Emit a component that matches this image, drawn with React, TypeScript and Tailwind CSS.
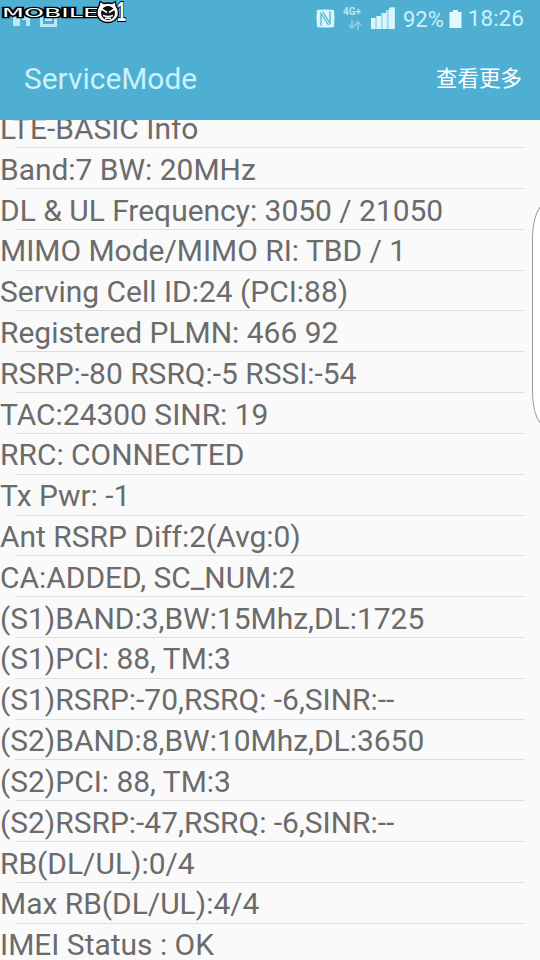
const rows = [
  "LTE-BASIC Info",
  "Band:7 BW: 20MHz",
  "DL & UL Frequency: 3050 / 21050",
  "MIMO Mode/MIMO RI: TBD / 1",
  "Serving Cell ID:24 (PCI:88)",
  "Registered PLMN: 466 92",
  "RSRP:-80 RSRQ:-5 RSSI:-54",
  "TAC:24300 SINR: 19",
  "RRC: CONNECTED",
  "Tx Pwr: -1",
  "Ant RSRP Diff:2(Avg:0)",
  "CA:ADDED, SC_NUM:2",
  "(S1)BAND:3,BW:15Mhz,DL:1725",
  "(S1)PCI: 88, TM:3",
  "(S1)RSRP:-70,RSRQ: -6,SINR:--",
  "(S2)BAND:8,BW:10Mhz,DL:3650",
  "(S2)PCI: 88, TM:3",
  "(S2)RSRP:-47,RSRQ: -6,SINR:--",
  "RB(DL/UL):0/4",
  "Max RB(DL/UL):4/4",
  "IMEI Status : OK",
];

function Watermark() {
  return (
    <svg width="140" height="30" viewBox="0 0 140 30" className="absolute top-0 left-0">
      <text
        x="2"
        y="17"
        textLength="97"
        lengthAdjust="spacingAndGlyphs"
        className="fill-white stroke-black stroke-[2.5px] font-['DejaVu_Sans'] text-[12.5px]"
        paintOrder="stroke"
      >
        MOBILE
      </text>
      <text
        x="117"
        y="21"
        className="fill-white stroke-black stroke-[2px] font-['Liberation_Sans'] text-[27px] font-bold"
        textLength="9"
        lengthAdjust="spacingAndGlyphs"
        paintOrder="stroke"
      >
        1
      </text>
      <path
        d="M99 6L100 1.500L104 3.500Q108 2.500 112 3.500L115.500 1.500L116 6Q119.500 11 118 16Q115 22.500 108 22.500Q100 22.500 97.500 16Q96 11 99 6Z"
        fill="#fff"
        stroke="#000"
        strokeWidth="1.300"
      />
      <circle cx="108" cy="13" r="7" fill="#111" />
      <path d="M101.500 9l5.500 3.500M114.500 9L109 12.500M103 15.500q5 2 10 0M105 18.300h6" fill="none" stroke="#fff" strokeWidth="1.500" />
    </svg>
  );
}

function NotificationIcons() {
  return (
    <svg width="60" height="28" viewBox="0 0 60 28" className="text-[#b9e9f6]" fill="currentColor">
      <path d="M13 12h7v14h-7zM22 12h8v14h-4v-6h-4z" />
      <path d="M40 12h17v15H40zM43 15v9h11v-9z" fillRule="evenodd" />
      <path d="M45 17h7v4h-7z" />
    </svg>
  );
}

function NfcIcon() {
  return (
    <svg width="19" height="19" viewBox="0 0 19 19" className="text-[#d9f6fd]">
      <path d="M1 1q8-1 17 0q1 8 0 17q-9 1-17 0q-1-9 0-17z" fill="currentColor" />
      <path d="M5 17V4.500l7.500 11.500M6.500 2.500l7.500 12V2" fill="none" stroke="#4eafd3" strokeWidth="1.200" />
    </svg>
  );
}

function StatusBar() {
  return (
    <div className="relative flex h-[38px] items-center">
      <div className="mt-[-10px]">
        <NotificationIcons />
      </div>
      <Watermark />
      <div className="mt-[-2px] ml-[256px]">
        <NfcIcon />
      </div>
      <div className="mt-[-3px] ml-[8px] w-5 text-[#b9e9f6]">
        <div className="text-[10px] leading-[12px] font-bold">4G+</div>
        <svg width="14" height="10" viewBox="0 0 14 10" className="mt-[2px] ml-[5px]" fill="none" stroke="#87cce6" strokeWidth="1.800">
          <path d="M4 0v8M1 5l3 3 3-3M10 10V2M7 5l3-3 3 3" />
        </svg>
      </div>
      <svg width="25" height="23" viewBox="0 0 25 23" className="mt-[-2px] ml-[8px]">
        <path d="M0 11h5V9h5V6h5V3h4V0h5v22H0z" fill="#a6dff0" />
        <path d="M0 11h4v11H0zM6 9h4v13H6zM12 6h3.500v16H12zM18 1h5.500v21H18z" fill="#dcf6fc" />
      </svg>
      <span className="ml-[7px] text-[22px] text-[#c8f2fc]">92%</span>
      <svg width="13" height="18" viewBox="0 0 13 18" className="mt-[-1px] ml-[5px] text-[#e3f9fe]" fill="currentColor">
        <path d="M4 0h5v2h3.500v16H.500V2H4z" />
      </svg>
      <span className="ml-[6px] text-[22.5px] text-[#c8f2fc]">18:26</span>
    </div>
  );
}

function Row({ label }: { label: string }) {
  return (
    <li className="h-[40.82px] shrink-0">
      <div className="h-[39.82px] pt-[0.5px] text-[29.95px] leading-[41px] whitespace-pre text-[#6b6b6b]">{label}</div>
      <div className="mr-[15px] ml-[15px] h-px bg-[#dedede]" />
    </li>
  );
}

export default function App() {
  return (
    <div className="relative flex h-[960px] w-[540px] flex-col overflow-hidden bg-[#fafafa] font-[Roboto,'Noto_Sans_CJK_TC',sans-serif]">
      <header className="h-[120px] shrink-0 bg-[#4eafd3]">
        <StatusBar />
        <div className="flex h-[82px] items-center justify-between pr-[18px] pl-6">
          <h1 className="text-[29.9px] text-[#c8f2fc]">ServiceMode</h1>
          <button type="button" className="mt-px text-[21.5px] text-white">
            查看更多
          </button>
        </div>
      </header>
      <main className="min-h-0 flex-1 overflow-hidden">
        <ul className="mt-[-12.6px] flex flex-col">
          {rows.map((label, i) => (
            <Row key={i} label={label} />
          ))}
        </ul>
      </main>
      {/* edge panel handle, half off screen */}
      <div className="absolute top-[203px] left-[532px] h-[224px] w-7 rounded-[14px/36px] border border-[#999] bg-white" />
    </div>
  );
}
